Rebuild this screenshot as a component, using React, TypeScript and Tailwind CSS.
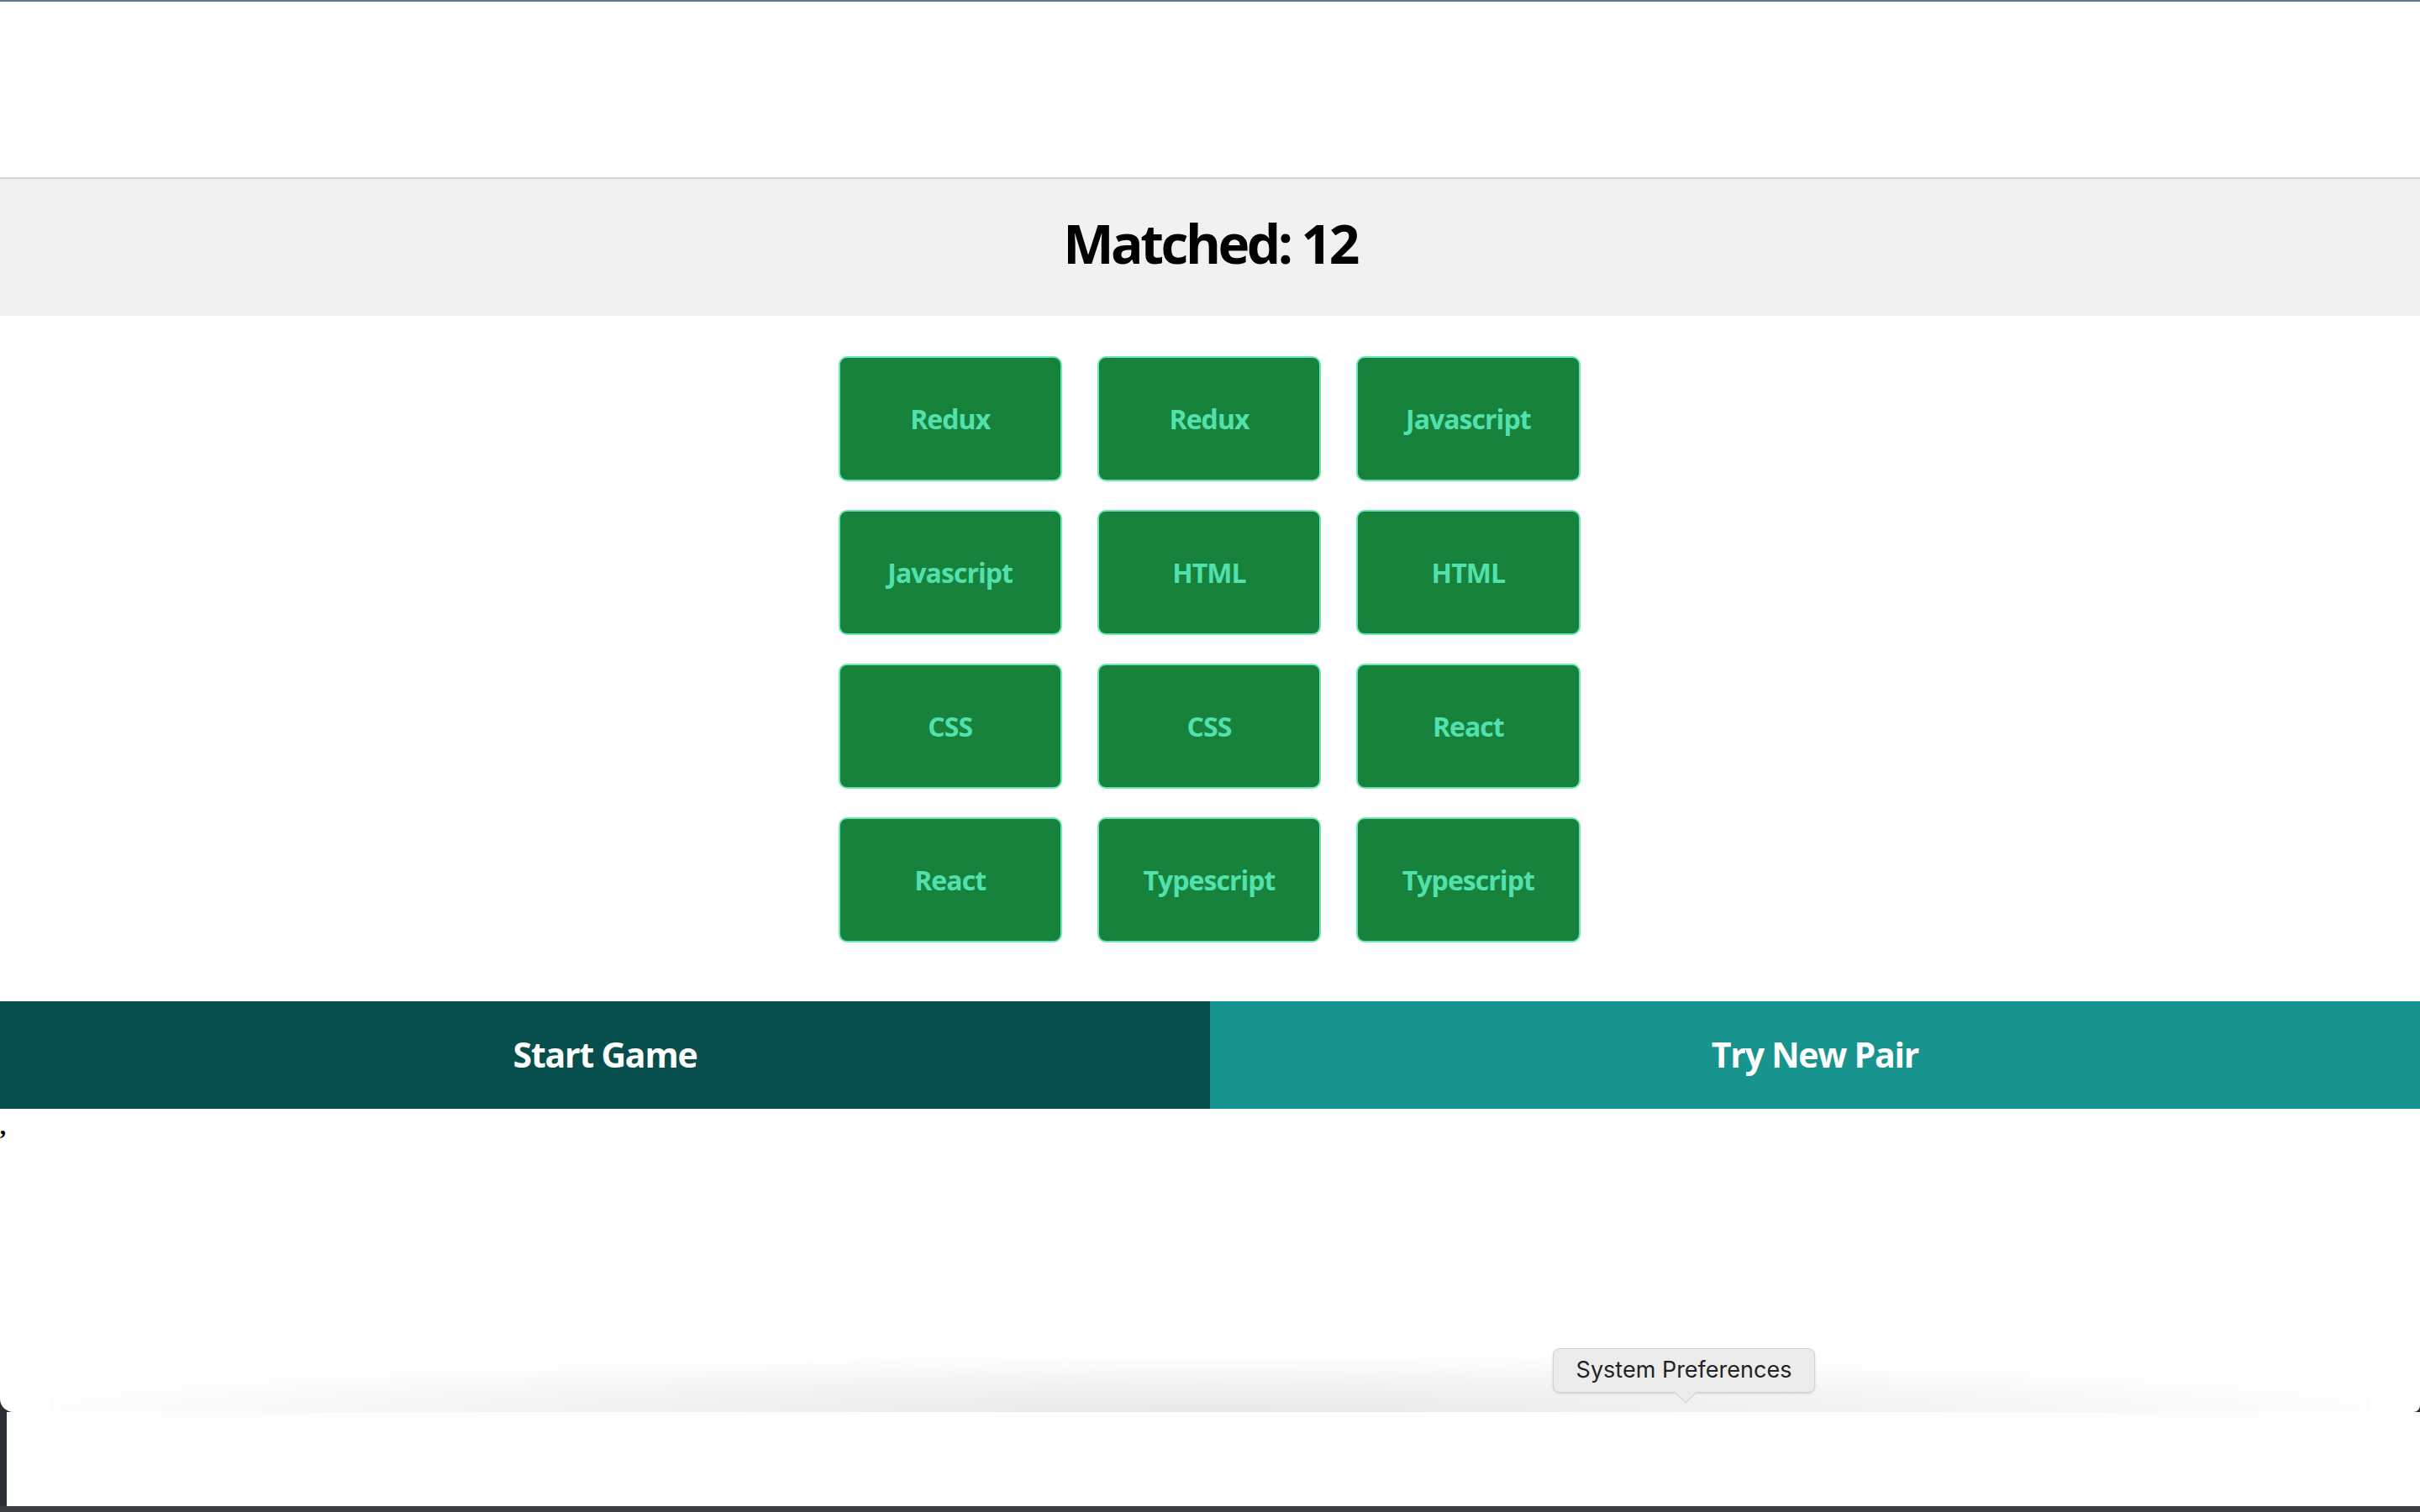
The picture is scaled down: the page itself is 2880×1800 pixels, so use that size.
const tiles = [
  'Redux', 'Redux', 'Javascript',
  'Javascript', 'HTML', 'HTML',
  'CSS', 'CSS', 'React',
  'React', 'Typescript', 'Typescript',
];

function Tile({ label }: { label: string }) {
  return (
    <div className="flex h-[149px] items-center justify-center rounded-[10px] border-2 border-[#6ee7b7] bg-[#17823c] text-[32px] font-bold tracking-[-0.03em] text-[#52e0ac]">
      {label}
    </div>
  );
}

export default function App() {
  return (
    <div
      className="relative flex h-[1800px] w-[2880px] flex-col overflow-hidden bg-white"
      style={{ fontFamily: '"Open Sans", "Noto Sans", sans-serif' }}
    >
      <div className="h-[2px] bg-[#5d7884]" />
      <div className="h-[209px]" />

      <div className="flex h-[165px] items-center justify-center border-t-2 border-[#d6d6d6] bg-[#f1f1f1] pb-[10px]">
        <h1 className="text-[64px] font-bold tracking-[-0.055em] text-black">Matched: 12</h1>
      </div>

      <div className="mt-[48px] grid w-[885px] grid-cols-3 gap-x-[42px] gap-y-[34px] self-center pr-[2px]">
        {tiles.map((t, i) => (
          <Tile key={i} label={t} />
        ))}
      </div>

      <div className="mt-[70px] grid h-[128px] grid-cols-2">
        <button className="bg-[#064f4c] text-[41px] font-bold tracking-[-0.03em] text-white">Start Game</button>
        <button className="bg-[#18948e] text-[41px] font-bold tracking-[-0.03em] text-white">Try New Pair</button>
      </div>

      <div className="pl-[1px] text-[30px] font-bold italic leading-[40px] text-black" style={{ fontFamily: '"Liberation Serif", serif' }}>
        ,
      </div>

      <div className="flex-1" />

      {/* dock */}
      <div className="relative h-[112px] bg-[#2b2f33] pl-[8px]">
        <div className="h-full bg-[#fdfdfd]" />
        <div className="absolute -top-[16px] left-0 h-[16px] w-[16px] bg-[#2b2f33]" />
        <div className="absolute -top-[16px] left-0 h-[16px] w-[16px] rounded-bl-[16px] bg-white" />
        <div className="absolute -top-[14px] right-0 h-[14px] w-[8px] bg-[#2b2f33]" />
        <div className="absolute -top-[14px] right-0 h-[14px] w-[8px] rounded-br-[14px] bg-white" />
      </div>
      <div className="h-[7px] bg-[#3a3d40]" />

      {/* dock shadow */}
      <div className="pointer-events-none absolute left-[60px] right-[60px] top-[1610px] h-[71px] bg-[radial-gradient(ellipse_55%_100%_at_50%_100%,#e8e8e8_0%,#f3f3f3_50%,rgba(255,255,255,0)_100%)]" />

      {/* tooltip */}
      <div className="absolute left-[1848px] top-[1605px] flex h-[53px] w-[312px] items-center justify-center rounded-[8px] border border-[#d2d2d2] bg-[#ececec] text-[27px] text-[#222] shadow-[0_1px_3px_rgba(0,0,0,0.15)]" style={{ fontFamily: 'Inter, "Liberation Sans", sans-serif' }}>
        System Preferences
        <div className="absolute -bottom-[10px] left-[148px] h-[18px] w-[18px] rotate-45 border-b border-r border-[#d2d2d2] bg-[#ececec]" />
      </div>
    </div>
  );
}
